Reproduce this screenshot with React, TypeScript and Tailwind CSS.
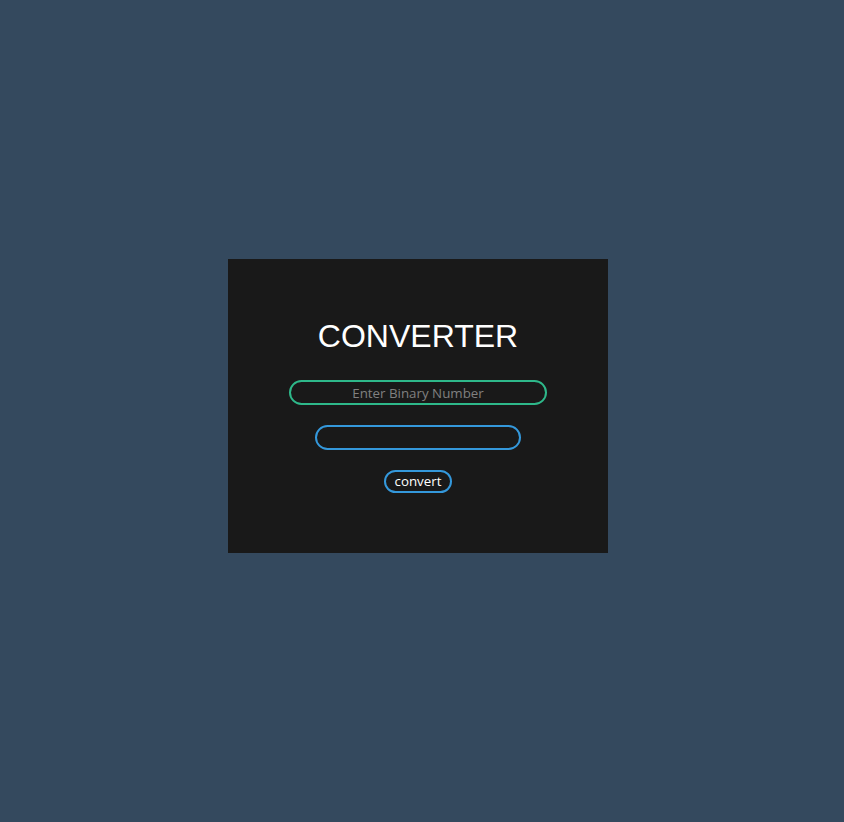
import React from 'react';

export default function App() {
  return (
    <div className="min-h-screen bg-[#34495e] flex items-center justify-center pr-2 pb-[10px]">
      <form
        className="w-[380px] h-[294px] bg-[#191919] flex flex-col items-center pt-[59px]"
        onSubmit={(e) => e.preventDefault()}
      >
        <h1 className="text-white text-[32px] leading-[37px] font-medium uppercase font-['Liberation_Sans',Arial,sans-serif]">
          Converter
        </h1>
        <input
          type="text"
          autoFocus
          placeholder="Enter Binary Number"
          className="mt-[25px] w-[258px] h-[25px] rounded-full border-2 border-[#2eb88a] bg-transparent text-center text-white text-[13.333px] font-['Open_Sans',sans-serif] placeholder:text-[#808080] outline-none"
        />
        <input
          type="text"
          readOnly
          className="mt-[20px] w-[206px] h-[25px] rounded-full border-2 border-[#3498db] bg-transparent text-center text-white text-[13.333px] font-['Open_Sans',sans-serif] outline-none"
        />
        <button
          type="submit"
          className="mt-[20px] w-[68px] h-[23px] pt-px rounded-full border-2 border-[#3498db] bg-transparent text-white text-[13.333px] leading-none font-['Open_Sans',sans-serif]"
        >
          convert
        </button>
      </form>
    </div>
  );
}
